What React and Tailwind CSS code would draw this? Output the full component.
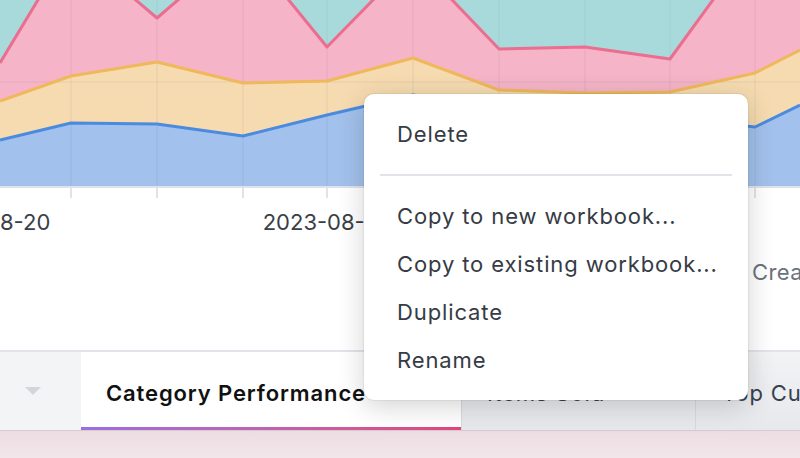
const xs = [0, 71, 157, 243, 327, 413, 499, 585, 670, 755, 800];
const blue = [140, 123, 124, 136, 115, 95, 110, 105, 118, 127, 105];
const yellow = [101, 76, 62, 83, 81, 58, 90, 93, 92, 73, 50];
const pink = [63, -55, 18, -56, 47, -41, 49, 47, 59, -58, -100];
const grid = [-14, 71, 157, 243, 327, 413, 499, 585, 670, 755];
const BASE = 186;

const line = (ys) => xs.map((x, i) => `${x},${ys[i]}`).join(' ');
const area = (ys) => `0,${BASE} ${line(ys)} 800,${BASE}`;

function Chart() {
  return (
    <svg width="800" height="258" className="block">
      <rect x="0" y="-10" width="800" height={BASE + 10} fill="#a9dadb" />
      <polygon points={area(pink)} fill="#f5b4c7" />
      <polygon points={area(yellow)} fill="#f6dbb0" />
      <polygon points={area(blue)} fill="#a2c1ec" />
      {grid.map((x) => (
        <line key={x} x1={x} x2={x} y1="0" y2={BASE} stroke="rgba(110,110,140,0.08)" strokeWidth="1.5" />
      ))}
      <line x1="0" x2="800" y1="82" y2="82" stroke="rgba(110,110,140,0.08)" strokeWidth="1.5" />
      <polyline points={line(pink)} fill="none" stroke="#eb6d8f" strokeWidth="3" strokeLinejoin="round" />
      <polyline points={line(yellow)} fill="none" stroke="#efb85b" strokeWidth="3" strokeLinejoin="round" />
      <polyline points={line(blue)} fill="none" stroke="#4a8be0" strokeWidth="3" strokeLinejoin="round" />
      <rect x="0" y={BASE} width="800" height="2" fill="#dfe2e8" />
      {grid.map((x) => (
        <line key={'t' + x} x1={x} x2={x} y1={BASE + 2} y2={BASE + 12} stroke="#d7dae0" strokeWidth="1.5" />
      ))}
      <text x="-14" y="230" textAnchor="middle" fontFamily="Inter" fontSize="22" fill="#3b3f48">2023-08-20</text>
      <text x="327" y="230" textAnchor="middle" fontFamily="Inter" fontSize="22" fill="#3b3f48">2023-08-24</text>
    </svg>
  );
}

const items = ['Copy to new workbook...', 'Copy to existing workbook...', 'Duplicate', 'Rename'];

export default function App() {
  return (
    <div className="relative w-[800px] h-[458px] overflow-hidden bg-white font-['Inter',sans-serif]">
      <div className="h-[350px] flex flex-col">
        <Chart />
        <div className="pl-[752px] whitespace-nowrap text-[22px] leading-[28px] tracking-[0.02em] text-[#6b7280]">Created by</div>
      </div>

      <div className="h-[80px] flex border-t-2 border-[#e3e4ea]">
        <div className="w-[81px] bg-[#f3f4f6] flex items-center pl-[25px]">
          <svg width="16" height="8" viewBox="0 0 16 8"><polygon points="0,0 16,0 8,8" fill="#d3d5db" /></svg>
        </div>
        <div className="relative w-[380px] bg-white flex items-center pl-[25px] pt-[4px]">
          <span className="text-[22px] font-semibold tracking-[0.04em] text-[#111] whitespace-nowrap">Category Performance</span>
          <div className="absolute left-0 right-0 bottom-0 h-[3px] bg-gradient-to-r from-[#9b6ee0] to-[#e2467b]" />
        </div>
        <div className="w-[234px] border-l border-[#d8dade] bg-gradient-to-b from-[#f2f3f5] to-[#e6e8eb] flex items-center pl-[25px] pt-[4px]">
          <span className="text-[22px] tracking-[0.04em] text-[#374151] whitespace-nowrap">Items Sold</span>
        </div>
        <div className="flex-1 border-l border-[#d8dade] bg-gradient-to-b from-[#f2f3f5] to-[#e6e8eb] flex items-center pl-[26px] pt-[4px] overflow-hidden">
          <span className="text-[22px] tracking-[0.04em] text-[#374151] whitespace-nowrap">Top Customers</span>
        </div>
      </div>
      <div className="h-[28px] border-t border-[#d9c9d1] bg-gradient-to-b from-[#ecdde3] to-[#f3e6eb]" />

      <div className="absolute left-[364px] top-[94px] w-[384px] bg-white rounded-[10px] shadow-[0_6px_28px_rgba(0,0,0,0.18)] ring-1 ring-black/5 py-[16px] text-[22px] text-[#363b45] tracking-[0.04em]">
        <div className="h-[48px] flex items-center px-[33px]">Delete</div>
        <div className="mx-[16px] my-[16px] h-[2px] bg-[#e1e5ea]" />
        {items.map((t) => (
          <div key={t} className="h-[48px] flex items-center px-[33px] whitespace-nowrap">{t}</div>
        ))}
      </div>
    </div>
  );
}
